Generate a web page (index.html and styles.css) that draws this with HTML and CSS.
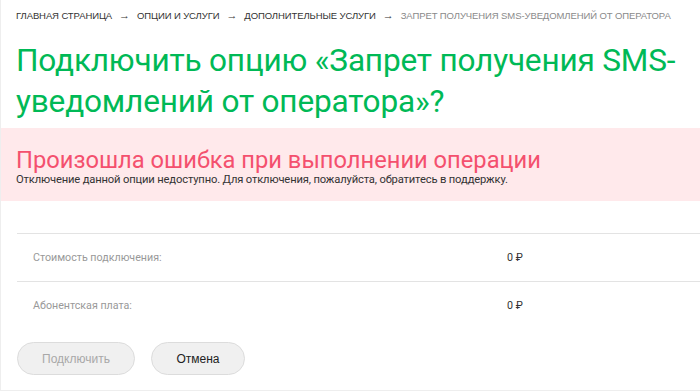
FILE: index.html
```html
<!DOCTYPE html>
<html lang="ru">
<head>
    <meta charset="UTF-8">
    <meta name="viewport" content="width=device-width, initial-scale=1.0">
    <title>Запрет получения SMS-уведомлений от оператора</title>
    <link rel="stylesheet" href="styles.css">
</head>
<body>
<div class="page">
    <nav class="breadcrumbs">
        <a href="#">Главная страница</a><span class="arrow">→</span><a href="#">Опции и услуги</a><span class="arrow">→</span><a href="#">Дополнительные услуги</a><span class="arrow">→</span><span class="current">Запрет получения SMS-уведомлений от оператора</span>
    </nav>

    <h1 class="title">Подключить опцию «Запрет получения SMS-уведомлений от оператора»?</h1>

    <div class="error">
        <h2 class="error-title">Произошла ошибка при выполнении операции</h2>
        <p class="error-text">Отключение данной опции недоступно. Для отключения, пожалуйста, обратитесь в поддержку.</p>
    </div>

    <div class="prices">
        <div class="price-row">
            <span class="price-label">Стоимость подключения:</span>
            <span class="price-value">0 ₽</span>
        </div>
        <div class="price-row">
            <span class="price-label">Абонентская плата:</span>
            <span class="price-value">0 ₽</span>
        </div>
    </div>

    <div class="actions">
        <button class="btn btn-disabled" disabled>Подключить</button>
        <button class="btn">Отмена</button>
    </div>
</div>
</body>
</html>
```

FILE: styles.css
```css
body {
    margin: 0;
    background: #fff;
    font-family: 'Roboto', 'Liberation Sans', sans-serif;
    color: #333;
}

.page {
    border-left: 1px solid #eee;
    border-bottom: 1px solid #eee;
    height: 391px;
    box-sizing: border-box;
    overflow: hidden;
}

.breadcrumbs {
    padding: 9px 15px 0;
    font-family: 'Liberation Sans', Arial, sans-serif;
    font-size: 9.5px;
    letter-spacing: -0.1px;
    text-transform: uppercase;
    line-height: 13px;
    white-space: nowrap;
}

.breadcrumbs a {
    color: #333;
    text-decoration: none;
}

.breadcrumbs .arrow {
    display: inline-block;
    margin: 0 7px;
    font-size: 11px;
    color: #333;
}

.breadcrumbs .current {
    color: #8a8a8a;
}

.title {
    margin: 18px 15px 0;
    font-size: 31.6px;
    font-weight: 400;
    line-height: 41px;
    color: #00b956;
    letter-spacing: -0.2px;
}

.error {
    margin-top: 6px;
    background: #ffe9eb;
    height: 73px;
    padding: 19px 15px 0;
    box-sizing: border-box;
}

.error-title {
    margin: 0;
    font-size: 23.7px;
    font-weight: 400;
    line-height: 26px;
    color: #f4506e;
}

.error-text {
    margin: 0;
    font-size: 11.2px;
    line-height: 14px;
    color: #333;
    letter-spacing: -0.15px;
}

.prices {
    margin: 32px 0 0 16px;
}

.price-row {
    display: flex;
    align-items: center;
    height: 47px;
    border-top: 1px solid #e3e3e3;
    font-size: 10.7px;
}

.price-label {
    width: 474px;
    padding-left: 16px;
    color: #999;
}

.price-value {
    color: #333;
}

.actions {
    display: flex;
    gap: 16px;
    padding: 13px 16px 0;
}

.btn {
    height: 33px;
    padding: 0 24px;
    border: 1px solid #dcdcdc;
    border-radius: 17px;
    background: #f0f0f0;
    font-family: 'Liberation Sans', Arial, sans-serif;
    font-size: 12px;
    color: #222;
    cursor: pointer;
}

.btn-disabled {
    width: 118px;
    color: #a8a8a8;
    cursor: default;
}

.btn:not(.btn-disabled) {
    width: 94px;
}
```
